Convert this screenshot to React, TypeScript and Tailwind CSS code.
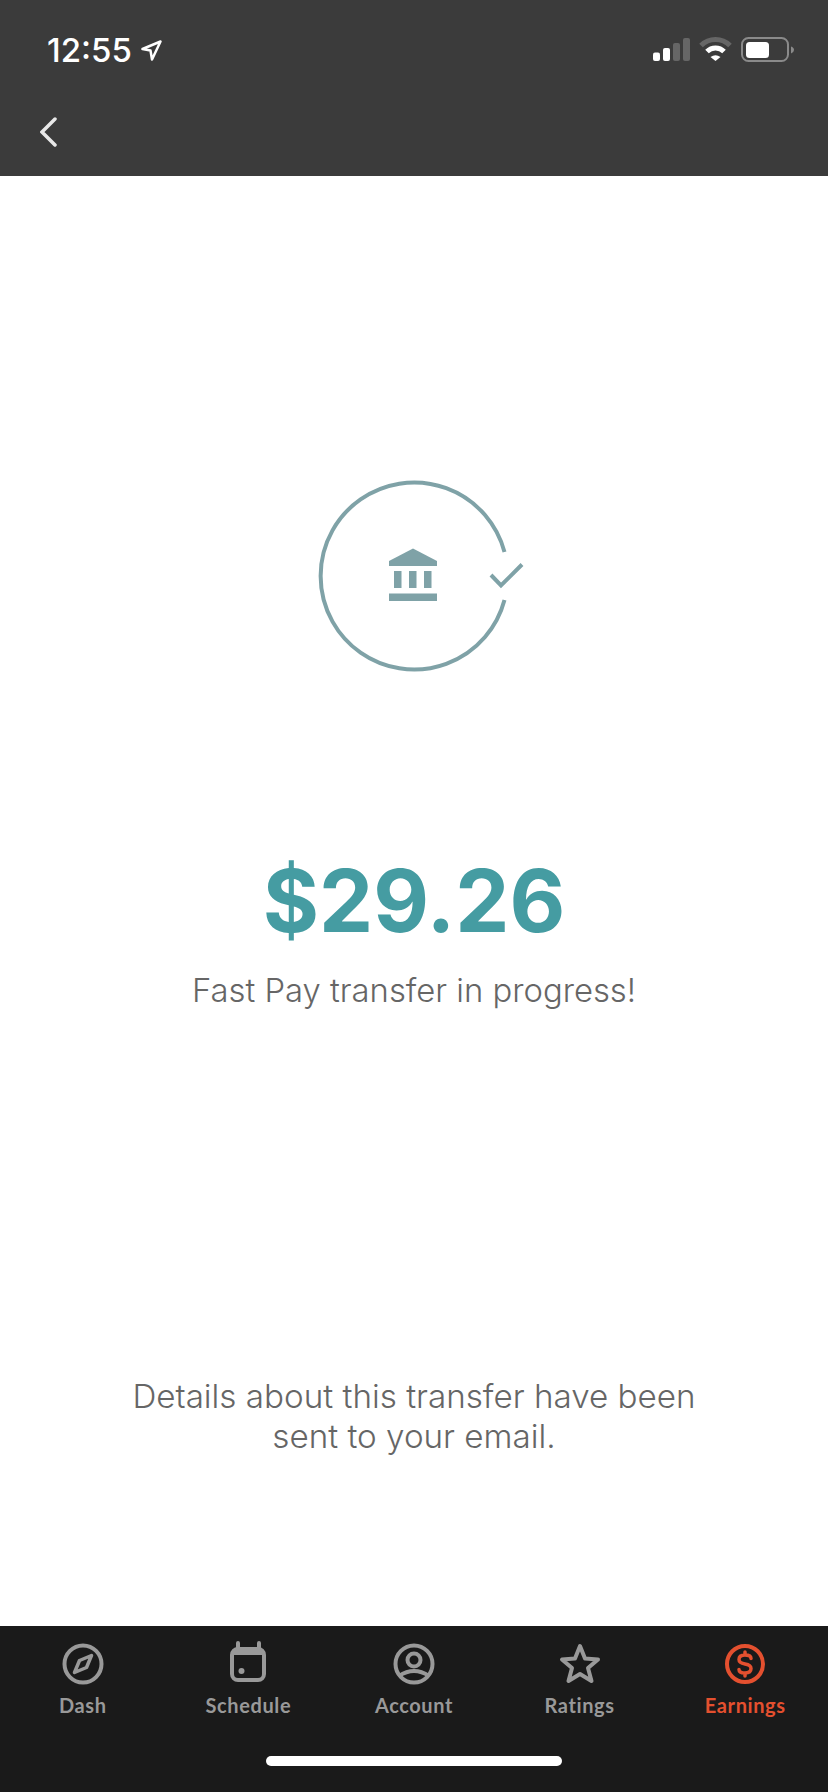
const inter = 'font-["Inter",sans-serif]';

function StatusIcons() {
  return (
    <svg width="146" height="30" viewBox="650 35 146 30">
      <rect x="653" y="52.5" width="7" height="8.5" rx="2" fill="#fff" />
      <rect x="663" y="48" width="7" height="13" rx="2" fill="#fff" />
      <rect x="673" y="43" width="7" height="18" rx="2" fill="#666" />
      <rect x="683" y="38" width="7" height="23" rx="2" fill="#666" />
      <path d="M701 45.5A20.5 20.5 0 0 1 730 45.5" fill="none" stroke="#666" strokeWidth="5" />
      <path d="M707 51.5A12 12 0 0 1 724 51.5" fill="none" stroke="#fff" strokeWidth="5" />
      <path d="M715.5 61L710.5 57Q715.5 53.5 720.5 57Z" fill="#fff" />
      <rect x="742" y="38" width="46" height="23" rx="6.5" fill="none" stroke="#8a8a8a" strokeWidth="2" />
      <rect x="746" y="42" width="23" height="16" rx="3.5" fill="#fff" />
      <path d="M791 46.5Q794 47.5 794 50Q794 52 791 53.5Z" fill="#8a8a8a" />
    </svg>
  );
}

function TransferIcon() {
  return (
    <svg width="220" height="200" viewBox="310 475 220 200" className="ml-[12px]">
      <path d="M504.5 552A93.5 93.5 0 1 0 504.5 600" fill="none" stroke="#7fa2a7" strokeWidth="4" />
      <path d="M491 575L501 585.5L522 564.5" fill="none" stroke="#7fa2a7" strokeWidth="4" />
      <path d="M413 548.5L437 561V566H389V561Z" fill="#7fa2a7" />
      <rect x="394" y="571" width="7.5" height="17" fill="#7fa2a7" />
      <rect x="409" y="571" width="7.5" height="17" fill="#7fa2a7" />
      <rect x="424" y="571" width="7.5" height="17" fill="#7fa2a7" />
      <rect x="389" y="593.5" width="48" height="7.5" fill="#7fa2a7" />
    </svg>
  );
}

function DashIcon() {
  return (
    <svg width="48" height="48" viewBox="0 0 48 48" fill="none">
      <circle cx="24" cy="24" r="18.5" stroke="currentColor" strokeWidth="4" />
      <path
        d="M32.5 15.5L27.5 27.5L15.5 32.5L20.5 20.5Z"
        stroke="currentColor"
        strokeWidth="3.5"
        strokeLinejoin="round"
      />
    </svg>
  );
}

function ScheduleIcon() {
  return (
    <svg width="48" height="48" viewBox="0 0 48 48" fill="none">
      <rect x="8" y="9" width="32" height="31" rx="6" stroke="currentColor" strokeWidth="4" />
      <path d="M8 13H40" stroke="currentColor" strokeWidth="4" />
      <path d="M14 3V8M35 3V8" stroke="currentColor" strokeWidth="4" strokeLinecap="round" />
      <circle cx="17.5" cy="31" r="3" fill="currentColor" />
    </svg>
  );
}

function AccountIcon() {
  return (
    <svg width="48" height="48" viewBox="0 0 48 48" fill="none">
      <circle cx="24" cy="24" r="18.5" stroke="currentColor" strokeWidth="4" />
      <circle cx="24" cy="20" r="6.5" stroke="currentColor" strokeWidth="4" />
      <path d="M9 36Q24 26 39 36" stroke="currentColor" strokeWidth="4" />
    </svg>
  );
}

function RatingsIcon() {
  return (
    <svg width="48" height="48" viewBox="0 0 48 48" fill="none">
      <path
        d="M24 6L29 18.5L42 19.5L32 28L35.5 41L24 34L12.5 41L16 28L6 19.5L19 18.5Z"
        stroke="currentColor"
        strokeWidth="4"
        strokeLinejoin="round"
      />
    </svg>
  );
}

function EarningsIcon() {
  return (
    <svg width="48" height="48" viewBox="0 0 48 48" fill="none">
      <circle cx="24" cy="24" r="18" stroke="currentColor" strokeWidth="4" />
      <path
        d="M30 18.5C30 16 27.5 15 24 15C20.5 15 18 16.5 18 19.5C18 22.5 21 23.5 24 24C27 24.5 30 25.5 30 28.5C30 31.5 27.5 33 24 33C20.5 33 18 32 18 29.5M24 12V15M24 33V36"
        stroke="currentColor"
        strokeWidth="3.5"
        strokeLinecap="round"
      />
    </svg>
  );
}

const tabs = [
  { label: 'Dash', icon: <DashIcon /> },
  { label: 'Schedule', icon: <ScheduleIcon /> },
  { label: 'Account', icon: <AccountIcon /> },
  { label: 'Ratings', icon: <RatingsIcon /> },
  { label: 'Earnings', icon: <EarningsIcon />, active: true },
];

export default function App() {
  return (
    <div className={`flex h-[1792px] w-[828px] flex-col overflow-hidden bg-white ${inter}`}>
      <header className="h-[176px] bg-[#3b3b3b] text-white">
        <div className="flex items-center justify-between pl-[47px] pr-[32px] pt-[35px]">
          <div className="flex items-center gap-[9px]">
            <span className="text-[33px] font-medium leading-[30px]">12:55</span>
            <svg width="21" height="21" viewBox="0 0 21 21" fill="none">
              <path
                d="M1.5 9L19.5 1.5L11 19.5L9.5 10.5Z"
                stroke="#fff"
                strokeWidth="2.5"
                strokeLinejoin="round"
              />
            </svg>
          </div>
          <StatusIcons />
        </div>
        <div className="pl-[40px] pt-[52px]">
          <svg width="17" height="30" viewBox="0 0 17 30" fill="none">
            <path d="M15 2L2 15L15 28" stroke="#e8e8e8" strokeWidth="3.5" strokeLinecap="round" />
          </svg>
        </div>
      </header>

      <main className="flex flex-1 flex-col items-center pt-[299px] text-[#666]">
        <TransferIcon />
        <h1 className="mt-[176px] text-[86px] font-bold leading-[100px] text-[#459ca2]">$29.26</h1>
        <p className="mt-[19px] text-[32.8px] font-[350] leading-[40px]">Fast Pay transfer in progress!</p>
        <p className="mt-[366px] w-[600px] text-center text-[33.2px] font-[350] leading-[40px]">
          Details about this transfer have been sent to your email.
        </p>
      </main>

      <nav className="h-[166px] bg-[#1a1a1a]">
        <div className="grid grid-cols-5 pt-[14px]">
          {tabs.map((tab) => (
            <div
              key={tab.label}
              className={`flex flex-col items-center ${tab.active ? 'text-[#e4502f]' : 'text-[#999]'}`}
            >
              {tab.icon}
              <span className='mt-[5px] font-["Lato",sans-serif] text-[20px] font-bold leading-[24px] tracking-[0.6px]'>
                {tab.label}
              </span>
            </div>
          ))}
        </div>
        <div className="mx-auto mt-[39px] h-[10px] w-[296px] rounded-full bg-white" />
      </nav>
    </div>
  );
}
